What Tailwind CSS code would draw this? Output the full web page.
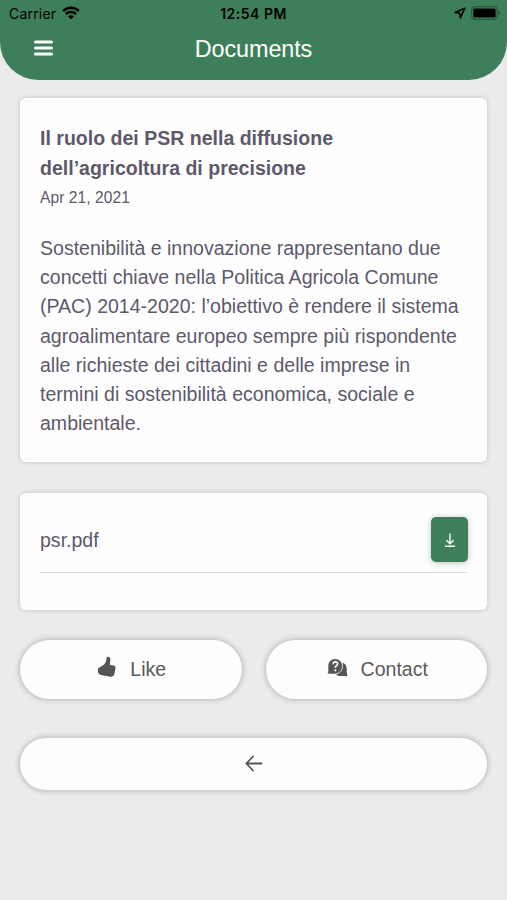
<!DOCTYPE html>
<html lang="it">
<head>
<meta charset="utf-8">
<title>Documents</title>
<script src="https://cdn.jsdelivr.net/npm/@tailwindcss/browser@4"></script>
</head>
<body class="bg-[#ebebeb] font-['Liberation_Sans',Arial,sans-serif] text-[#5d596b] w-[507px] h-[900px] overflow-hidden">
<header class="h-20 bg-[#3d7f5a] rounded-b-[38px]">
  <div class="h-7 grid grid-cols-3 items-center pl-[9px] pr-[6px] text-black font-['Inter',sans-serif] text-[14px]">
    <div class="flex items-center gap-[6px] -mt-[2px]"><span class="tracking-[0.2px]">Carrier</span>
      <svg class="w-[18px] h-[14px] -mt-px" viewBox="0 0 19 15" fill="none" stroke="#000" stroke-width="2.7"><path d="M1 5.4C5.8.8 13.2.8 18 5.4"/><path d="M4 8.6c3.1-3 7.900-3 11 0"/><path d="M9.500 14.300 6.300 11.200c1.800-1.700 4.600-1.700 6.400 0z" fill="#000" stroke="none"/></svg>
    </div>
    <div class="text-center font-semibold tracking-[0.5px] -ml-[3px] -mt-px">12:54 PM</div>
    <div class="flex justify-end items-center gap-[5px] -mt-[2px]">
      <svg class="w-[12px] h-[12px]" viewBox="0 0 13 13" fill="none" stroke="#000" stroke-width="1.700" stroke-linejoin="round"><path d="M11.700 1.300 1.200 5.900l5 .8.7 5z"/></svg>
      <svg class="w-[30px] h-[14px]" viewBox="0 0 30 14"><rect x=".7" y=".7" width="25.500" height="12.600" rx="3.500" fill="none" stroke="#285b40" stroke-width="1.200"/><rect x="2.400" y="2.400" width="22.200" height="9.200" rx="1.500" fill="#000"/><path d="M27.500 4.800c2 .8 2 3.600 0 4.400z" fill="#1f4932"/></svg>
    </div>
  </div>
  <div class="h-[42px] grid grid-cols-3 items-center text-white">
    <svg class="ml-[33px] -mt-[3px] w-[20px] h-[16px]" viewBox="0 0 20 16" stroke="#fff" stroke-width="3" stroke-linecap="round"><path d="M2.500 2h16M2.500 8h16M2.500 14h16"/></svg>
    <h1 class="text-center text-[23.4px] tracking-[-0.1px] pt-px">Documents</h1>
  </div>
</header>
<main class="px-5 pt-[18px] text-[19.54px] leading-[29.3px] whitespace-nowrap">
  <section class="h-[364px] bg-[#fefefe] rounded-[6px] px-5 pt-[26.400px] shadow-[0_0_5px_rgba(0,0,0,0.17)]">
    <h2 class="font-bold"><span class="block">Il ruolo dei PSR nella diffusione</span><span class="block">dell’agricoltura di precisione</span></h2>
    <p class="text-[15.6px] leading-[30px] tracking-[0.06px] pt-[0.5px]">Apr 21, 2021</p>
    <p class="mt-[20.200px]">Sostenibilità e innovazione rappresentano due<br>concetti chiave nella Politica Agricola Comune<br>(PAC) 2014-2020: l’obiettivo è rendere il sistema<br>agroalimentare europeo sempre più rispondente<br>alle richieste dei cittadini e delle imprese in<br>termini di sostenibilità economica, sociale e<br>ambientale.</p>
  </section>
  <section class="mt-[31px] h-[117px] bg-[#fefefe] rounded-[6px] px-5 pt-6 shadow-[0_0_5px_rgba(0,0,0,0.17)]">
    <div class="h-[56px] flex justify-between items-start border-b border-[#dcdcdc]">
      <span class="mt-[9px]">psr.pdf</span>
      <button class="w-[37px] h-[45px] -mr-px rounded-[5px] bg-[#3d7f5a] shadow-[0_1px_6px_rgba(0,0,0,0.25)] grid place-items-center" aria-label="Download">
        <svg class="w-3 h-4" viewBox="0 0 12 16" fill="none" stroke="#fff" stroke-width="1.400"><path d="M6 1.500v10M2.400 8.200 6 11.700l3.600-3.500M1 14.200h10"/></svg>
      </button>
    </div>
  </section>
  <div class="mt-[30px] grid grid-cols-2 gap-6 text-[#595959]">
    <button class="h-[59px] bg-[#fefefe] rounded-full flex items-center justify-center gap-[14px] pl-[2px] shadow-[0_0_6px_rgba(0,0,0,0.3)]">
      <svg class="w-[19px] h-[22px] -mt-[5px]" viewBox="0 0 19 22" fill="#555"><path d="M10.800.8c1.800-.2 2.700 1.400 2.600 3.300-.1 1.800-.6 3.200-.5 4.200.1.900 1 .9 2.400.9 2.300 0 3.400.8 3.200 2.800-.1 1.100-.4 1.800-.5 3-.1 1.400-.4 2.400-1 3.700-.7 1.500-1.800 2.100-3.600 2l-9.300-1.600c-2.600-.6-3.400-3.300-3.300-5.200 0-1.400.8-2.200 1.900-2.700C5.900 9.900 8.300 8 9.100 5c.4-1.700.1-3.900 1.700-4.200z"/></svg><span class="pt-px">Like</span>
    </button>
    <button class="h-[59px] bg-[#fefefe] rounded-full flex items-center justify-center gap-[13px] pl-[2px] shadow-[0_0_6px_rgba(0,0,0,0.3)]">
      <svg class="w-[21px] h-[19px] -mt-[5px]" viewBox="0 0 21 19"><path d="M15.500 4.500c3.200 1.200 4.200 3.700 4.200 6.500 0 2.200.1 4.500.8 7h-7.500c-1.700 0-3.200-.8-4-1.800 5.300-.9 7.600-6 6.500-11.700z" fill="#555"/><path d="M.5 16c.8-2.600.5-5.200.5-7.800C1 3.900 4 .8 8.200.8s7.200 3.200 7.200 7.500-3.100 7.700-7.200 7.700z" fill="#555" stroke="#fefefe" stroke-width=".6"/><path d="M6.100 6.300c.1-3.500 5-3 4.500-.2-.3 1.500-2.300 1.600-2.300 3.700" fill="none" stroke="#fff" stroke-width="1.600"/><circle cx="8.300" cy="12.300" r="1.100" fill="#fff"/></svg><span class="pt-px">Contact</span>
    </button>
  </div>
  <button class="mt-[39px] w-full h-[52px] bg-[#fefefe] rounded-full grid place-items-center shadow-[0_0_6px_rgba(0,0,0,0.3)]" aria-label="Back">
    <svg class="w-[18px] h-[17px] -mt-[2px]" viewBox="0 0 18 17" fill="none" stroke="#555" stroke-width="1.800" stroke-linecap="round" stroke-linejoin="round"><path d="M8 1.500 1.300 8.500l6.700 7M1.500 8.500h15"/></svg>
  </button>
</main>
</body>
</html>
